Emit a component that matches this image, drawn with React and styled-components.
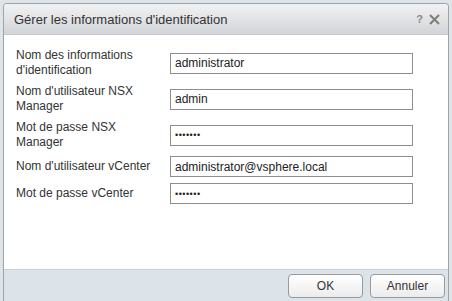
import React from "react";
import styled, { createGlobalStyle } from "styled-components";

const Global = createGlobalStyle`
  html, body { margin: 0; padding: 0; }
  body {
    background: #dfe4e9;
    font-family: Arial, "Liberation Sans", sans-serif;
    width: 452px;
    height: 301px;
    overflow: hidden;
  }
`;

const Page = styled.div`
  padding: 3px 3px 0 3px;
  height: 301px;
  box-sizing: border-box;
  display: flex;
`;

const Dialog = styled.div`
  flex: 1;
  display: flex;
  flex-direction: column;
  border: 1px solid #9ea3a8;
  border-bottom: none;
  border-radius: 4px 4px 0 0;
  overflow: hidden;
  background: #fff;
`;

const Header = styled.div`
  height: 30px;
  display: flex;
  align-items: center;
  justify-content: space-between;
  padding: 0 8px 0 10px;
  background: linear-gradient(#f1f2f3, #d2d5d8);
  border-bottom: 1px solid #c4c8cc;
`;

const Title = styled.div`
  font-size: 13px;
  color: #333;
`;

const Tools = styled.div`
  display: flex;
  align-items: center;
  gap: 6px;
`;

const Help = styled.span`
  font-size: 11px;
  font-weight: bold;
  color: #8a8a8a;
`;

const Body = styled.div`
  flex: 1;
  padding: 13px 0 0 12px;
  display: flex;
  flex-direction: column;
  gap: 6px;
`;

const Row = styled.div`
  display: grid;
  grid-template-columns: 154px 243px;
  align-items: center;
`;

const Label = styled.div`
  font-size: 12px;
  line-height: 15px;
  color: #333;
  width: ${(p) => p.$w || 140}px;
`;

const Input = styled.input`
  box-sizing: border-box;
  height: 21px;
  width: 243px;
  margin: 0;
  border: 1px solid #8e8e8e;
  padding: 0 4px;
  font-family: Arial, "Liberation Sans", sans-serif;
  font-size: ${(p) => (p.type === "password" ? 9 : 12)}px;
  letter-spacing: ${(p) => (p.type === "password" ? "0.5px" : "normal")};
  color: #222;
  background: #fff;
  outline: none;
`;

const Footer = styled.div`
  height: 32px;
  box-sizing: border-box;
  background: #dce3e9;
  border-top: 1px solid #c9cfd5;
  display: flex;
  justify-content: flex-end;
  align-items: flex-start;
  gap: 7px;
  padding: 4px 3px 0 0;
`;

const Button = styled.button`
  width: 75px;
  height: 24px;
  border: 1px solid #9a9a9a;
  border-radius: 4px;
  background: linear-gradient(#ffffff, #ececec);
  font-family: Arial, "Liberation Sans", sans-serif;
  font-size: 12px;
  color: #333;
  padding: 0;
`;

const rows = [
  { label: "Nom des informations d'identification", value: "administrator" },
  { label: "Nom d'utilisateur NSX Manager", value: "admin" },
  { label: "Mot de passe NSX Manager", value: "1234567", pw: true },
  { label: "Nom d'utilisateur vCenter", value: "administrator@vsphere.local", w: 154 },
  { label: "Mot de passe vCenter", value: "1234567", pw: true },
];

export default function App() {
  return (
    <>
      <Global />
      <Page>
        <Dialog>
          <Header>
            <Title>Gérer les informations d'identification</Title>
            <Tools>
              <Help>?</Help>
              <svg width="11" height="11" viewBox="0 0 11 11">
                <path d="M1 1L10 10M10 1L1 10" stroke="#7d7d7d" strokeWidth="2" />
              </svg>
            </Tools>
          </Header>
          <Body>
            {rows.map((r) => (
              <Row key={r.label}>
                <Label $w={r.w}>{r.label}</Label>
                <Input
                  type={r.pw ? "password" : "text"}
                  value={r.value}
                  readOnly
                />
              </Row>
            ))}
          </Body>
          <Footer>
            <Button>OK</Button>
            <Button>Annuler</Button>
          </Footer>
        </Dialog>
      </Page>
    </>
  );
}
